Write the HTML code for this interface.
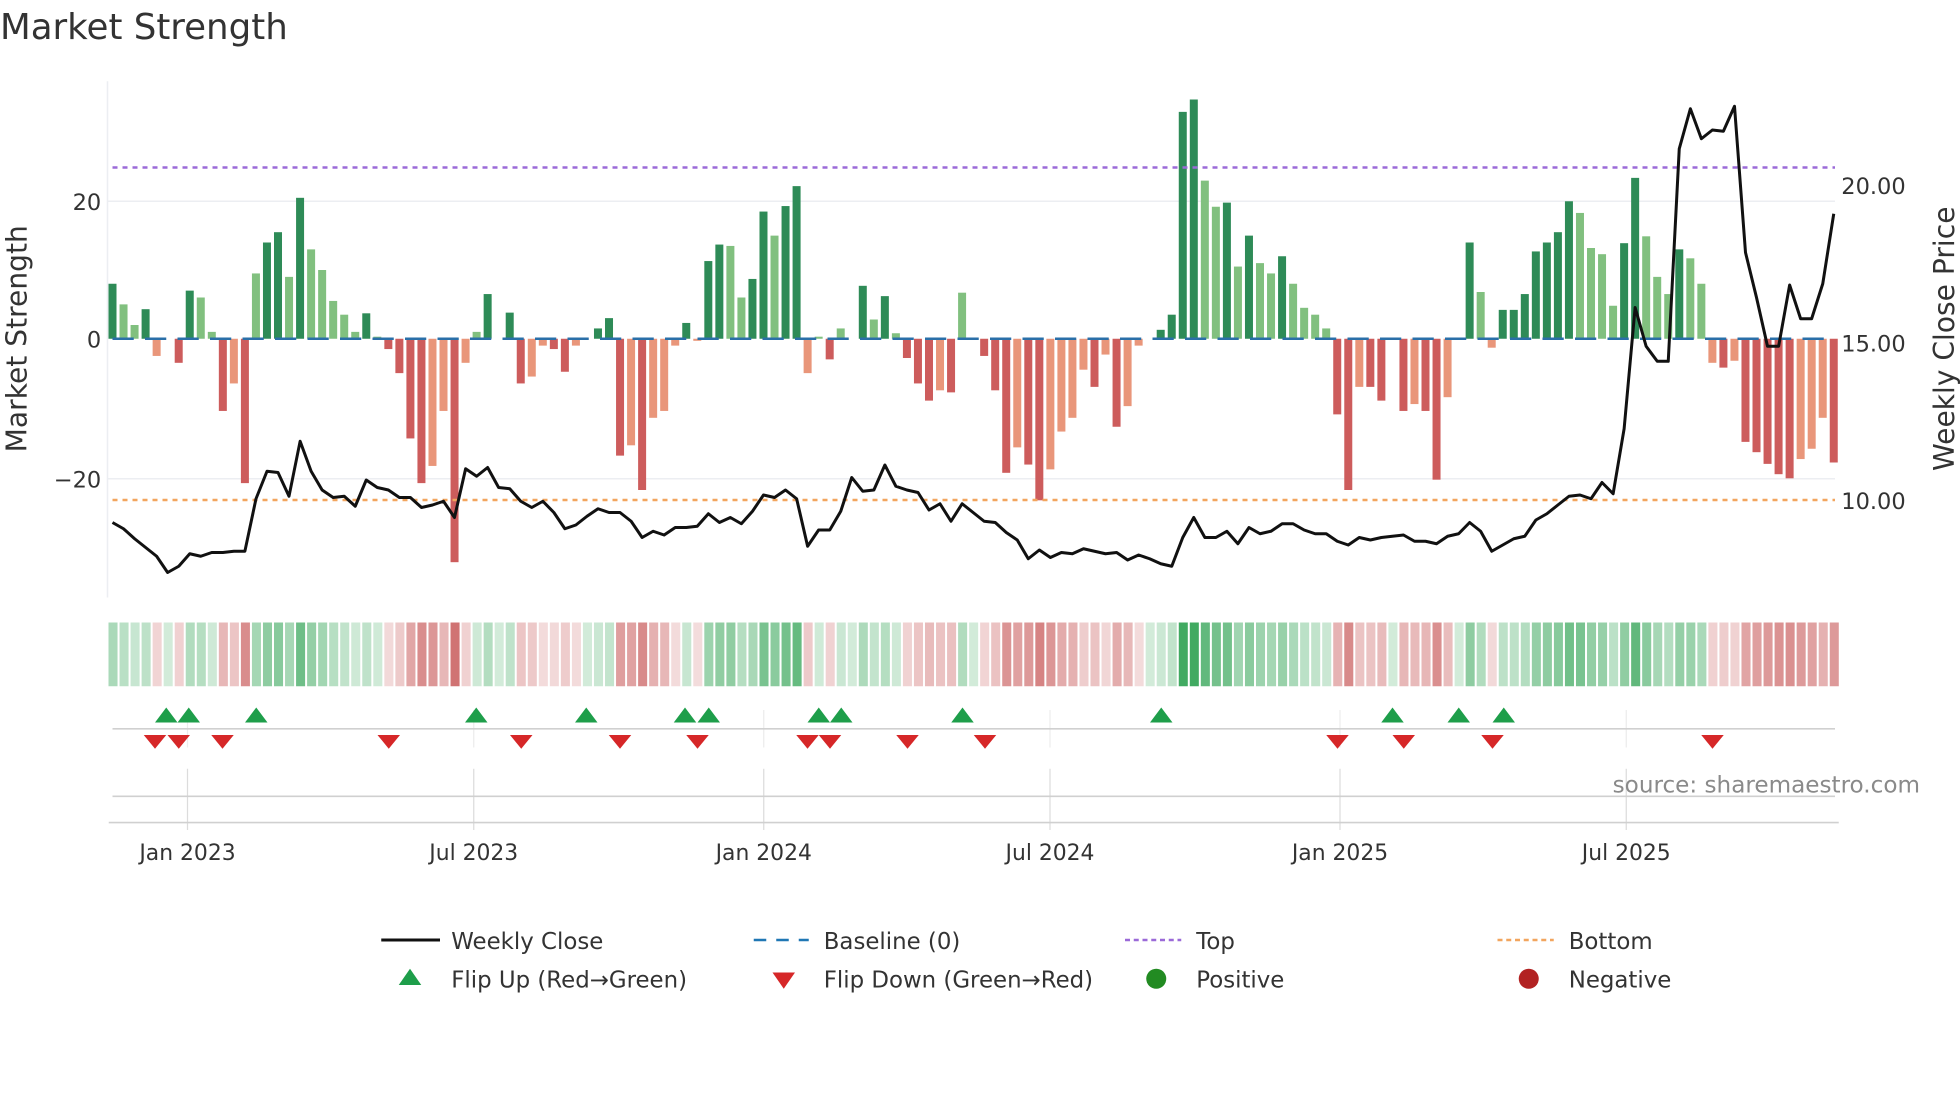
<!DOCTYPE html>
<html><head><meta charset="utf-8">
<style>
html,body{margin:0;padding:0;background:#fff;}
svg{display:block;}
text{font-family:"DejaVu Sans","Liberation Sans",sans-serif;fill:#333;}
</style></head>
<body>
<svg id="s" width="1960" height="1102" viewBox="0 0 1568 881.6" xmlns="http://www.w3.org/2000/svg">
<rect width="1568" height="882" fill="#fff"/>
<text x="0" y="31" font-size="28.5">Market Strength</text>
<line x1="86" y1="161" x2="1468" y2="161" stroke="#eceef2" stroke-width="1.2"/>
<line x1="86" y1="383" x2="1468" y2="383" stroke="#eceef2" stroke-width="1.2"/>
<line x1="86" y1="65" x2="86" y2="478" stroke="#eceef2" stroke-width="1.2"/>
<g id="bars"></g>
<line x1="90" y1="134" x2="1468" y2="134" stroke="#9b6ad8" stroke-width="2" stroke-dasharray="4,4"/>
<line x1="90" y1="400" x2="1468" y2="400" stroke="#f2a55e" stroke-width="2" stroke-dasharray="4,4"/>
<g id="base"></g>
<polyline id="price" fill="none" stroke="#111" stroke-width="2.4" stroke-linejoin="round"/>
<text x="81" y="168" font-size="18" text-anchor="end">20</text>
<text x="81" y="278" font-size="18" text-anchor="end">0</text>
<text x="81" y="390" font-size="18" text-anchor="end">−20</text>
<text x="1473" y="155" font-size="18">20.00</text>
<text x="1473" y="281" font-size="18">15.00</text>
<text x="1473" y="407" font-size="18">10.00</text>
<text transform="translate(21,271) rotate(-90)" font-size="22.5" text-anchor="middle">Market Strength</text>
<text transform="translate(1563,271) rotate(-90)" font-size="22.5" text-anchor="middle">Weekly Close Price</text>
<g id="heat"></g>
<g id="vg"></g>
<line x1="90" y1="583" x2="1468" y2="583" stroke="#d0d0d0" stroke-width="1.3"/>
<line x1="90" y1="637" x2="1468" y2="637" stroke="#d0d0d0" stroke-width="1.3"/>
<line x1="87" y1="658" x2="1471" y2="658" stroke="#d0d0d0" stroke-width="1.3"/>
<g id="flips"></g>
<text x="1536" y="634" font-size="18.5" text-anchor="end" style="fill:#8a8a8a">source: sharemaestro.com</text>
<g font-size="17.5">
<text x="150" y="688" text-anchor="middle">Jan 2023</text>
<text x="379" y="688" text-anchor="middle">Jul 2023</text>
<text x="611" y="688" text-anchor="middle">Jan 2024</text>
<text x="840" y="688" text-anchor="middle">Jul 2024</text>
<text x="1072" y="688" text-anchor="middle">Jan 2025</text>
<text x="1301" y="688" text-anchor="middle">Jul 2025</text>
</g>
<g font-size="18.3">
<line x1="305" y1="752" x2="352" y2="752" stroke="#111" stroke-width="2.4"/>
<text x="361" y="759">Weekly Close</text>
<line x1="603" y1="752" x2="647" y2="752" stroke="#1f77b4" stroke-width="2" stroke-dasharray="10,8"/>
<text x="659" y="759">Baseline (0)</text>
<line x1="900" y1="752" x2="945" y2="752" stroke="#9b6ad8" stroke-width="2" stroke-dasharray="4,3"/>
<text x="957" y="759">Top</text>
<line x1="1198" y1="752" x2="1243" y2="752" stroke="#f2a55e" stroke-width="2" stroke-dasharray="4,3"/>
<text x="1255" y="759">Bottom</text>
<polygon points="328,775 319,788 337,788" fill="#1e9e4a"/>
<text x="361" y="790">Flip Up (Red→Green)</text>
<polygon points="618,778 636,778 627,791" fill="#d62728"/>
<text x="659" y="790">Flip Down (Green→Red)</text>
<circle cx="925" cy="783" r="8" fill="#228b22"/>
<text x="957" y="790">Positive</text>
<circle cx="1223" cy="783" r="8" fill="#b22222"/>
<text x="1255" y="790">Negative</text>
</g>
</svg>
<script>
var v=[8,5,2,4.3,-2.5,0,-3.5,7,6,1,-10.5,-6.5,-21,9.5,14,15.5,9,20.5,13,10,5.5,3.5,1,3.7,0.3,-1.5,-5,-14.5,-21,-18.5,-10.5,-32.5,-3.5,1,6.5,0,3.8,-6.5,-5.5,-1,-1.5,-4.8,-1,0,1.5,3,-17,-15.5,-22,-11.5,-10.5,-1,2.3,-0.3,11.3,13.7,13.5,6,8.7,18.5,15,19.3,22.2,-5,0.3,-3,1.5,0,7.7,2.8,6.2,0.8,-2.8,-6.5,-9,-7.5,-7.8,6.7,0,-2.5,-7.5,-19.5,-15.8,-18.3,-23.5,-19,-13.5,-11.5,-4.5,-7,-2.3,-12.8,-9.8,-1,0,1.3,3.5,33,34.8,23,19.2,19.8,10.5,15,11,9.5,12,8,4.5,3.5,1.5,-11,-22,-7,-7,-9,0,-10.5,-9.5,-10.5,-20.5,-8.5,0,14,6.8,-1.3,4.2,4.2,6.5,12.7,14,15.5,20,18.3,13.2,12.3,4.8,13.9,23.4,14.9,9,6.5,13,11.7,8,-3.5,-4.2,-3.2,-15,-16.5,-18.2,-19.7,-20.3,-17.5,-16,-11.5,-18];
var py=[418,423,431,438,445,458,453,443,445,442,442,441,441,399,377,378,397,353,377,392,398,397,405,384,390,392,398,398,406,404,401,414,375,381,374,390,391,401,406,401,410,423,420,413,407,410,410,417,430,425,428,422,422,421,411,418,414,419,409,396,398,392,399,437,424,424,409,382,393,392,372,389,392,394,408,403,417,403,410,417,418,426,432,447,440,446,442,443,439,441,443,442,448,444,447,451,453,430,414,430,430,425,435,422,427,425,419,419,424,427,427,433,436,430,432,430,429,428,433,433,435,429,427,418,425,441,436,431,429,416,411,404,397,396,399,386,395,343,246,277,289,289,119,87,111,104,105,85,202,238,277,277,228,255,255,227,171];
var NS="http://www.w3.org/2000/svg";
function el(p,t,a){var e=document.createElementNS(NS,t);for(var k in a)e.setAttribute(k,a[k]);document.getElementById(p).appendChild(e);return e;}
var dx=(1467-90)/156, pts=[];
for(var i=0;i<v.length;i++){
 var x=90+dx*i, val=v[i], h=Math.abs(val)*5.5;
 var prev=i>0?v[i-1]:0, strong=Math.abs(val)>=Math.abs(prev);
 var col=val>=0?(strong?"#2e8b57":"#81c07f"):(strong?"#cd5c5c":"#e9967a");
 if(h>0.5) el("bars","rect",{x:x-3.2,y:val>=0?271-h:271,width:6.4,height:h,fill:col});
 pts.push(x.toFixed(1)+","+py[i]);
 var a=Math.min(Math.abs(val)/(val>=0?30:28),1);
 var hc=val>=0?"rgba(49,163,84,"+(0.22+0.7*a).toFixed(2)+")":"rgba(200,90,90,"+(0.2+0.65*a).toFixed(2)+")";
 el("heat","rect",{x:86+dx*i+0.8,y:498,width:dx-1.6,height:51,fill:hc});
}
document.getElementById("price").setAttribute("points",pts.join(" "));
for(var x=90;x<1468;x+=26) el("base","line",{x1:x,y1:271,x2:x+17,y2:271,stroke:"#2a6fa8","stroke-width":2});
[150,379,611,840,1072,1301].forEach(function(x){
 el("vg","line",{x1:x,y1:568,x2:x,y2:598,stroke:"#ececec","stroke-width":1});
 el("vg","line",{x1:x,y1:615,x2:x,y2:664,stroke:"#dcdcdc","stroke-width":1});
});
[133,151,205,381,469,548,567,655,673,770,929,1114,1167,1203].forEach(function(x){
 el("flips","polygon",{points:(x)+",566 "+(x-9)+",578 "+(x+9)+",578",fill:"#1e9e4a"});
});
[124,143,178,311,417,496,558,646,664,726,788,1070,1123,1194,1370].forEach(function(x){
 el("flips","polygon",{points:(x-9)+",588 "+(x+9)+",588 "+x+",599",fill:"#d62728"});
});
</script>
</body></html>
